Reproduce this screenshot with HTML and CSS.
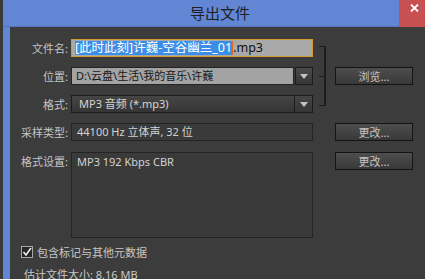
FILE: index.html
```html
<!DOCTYPE html>
<html lang="zh-CN">
<head>
<meta charset="utf-8">
<title>导出文件</title>
<link rel="stylesheet" href="styles.css">
</head>
<body>
<div class="win">
  <div class="titlebar">
    <div class="title">导出文件</div>
    <div class="close">
      <svg width="9" height="8" viewBox="0 0 9 8"><path d="M1 0.5 L8 7.5 M8 0.5 L1 7.5" stroke="#fff" stroke-width="1.8" fill="none"/></svg>
    </div>
  </div>
  <div class="content">
    <div class="grid">
      <div class="label r1">文件名:</div>
      <div class="field name r1"><span class="sel">[此时此刻]许巍-空谷幽兰_01</span><span class="caret"></span><span class="ext">.mp3</span></div>
      <div class="bracket"></div>

      <div class="label r2">位置:</div>
      <div class="combo r2">
        <div class="field loc">D:\云盘\生活\我的音乐\许巍</div>
        <div class="arrowbtn"><span class="tri"></span></div>
      </div>
      <div class="btn r2">浏览...</div>

      <div class="label r3">格式:</div>
      <div class="dropdown r3">
        <div class="ddtext">MP3 音频 (*.mp3)</div>
        <div class="ddarrow"><span class="tri"></span></div>
      </div>

      <div class="label r4">采样类型:</div>
      <div class="field dark r4">44100 Hz 立体声, 32 位</div>
      <div class="btn r4">更改...</div>

      <div class="label r5">格式设置:</div>
      <div class="field dark box r5">MP3 192 Kbps CBR</div>
      <div class="btn r5">更改...</div>
    </div>
    <div class="check">
      <svg class="cb" width="12" height="12" viewBox="0 0 12 12"><rect x="0.5" y="0.5" width="11" height="11" fill="#262626" stroke="#a8a8a8"/><path d="M2.5 6 L5 9 L10 2" stroke="#f0f0f0" stroke-width="1.6" fill="none"/></svg>
      <span>包含标记与其他元数据</span>
    </div>
    <div class="estimate">估计文件大小: 8.16 MB</div>
  </div>
</div>
</body>
</html>
```
FILE: styles.css
```css
html, body {
  margin: 0;
  padding: 0;
}
body {
  width: 425px;
  height: 279px;
  overflow: hidden;
  background: #3a3a3a;
  font-family: "Noto Sans", "Noto Sans CJK SC", sans-serif;
  font-size: 11px;
  color: #c6c6c6;
}
.win {
  margin-left: 3px;
  width: 422px;
  height: 279px;
  background: #6286d4;
  display: flex;
  flex-direction: column;
}
.titlebar {
  height: 26px;
  border-bottom: 1px solid #5675c0;
  display: flex;
  flex-shrink: 0;
}
.title {
  flex: 1;
  text-align: center;
  padding-left: 38px;
  font-family: "Noto Sans CJK SC", sans-serif;
  font-size: 15px;
  line-height: 25px;
  color: #1f1f1f;
}
.close {
  width: 26px;
  height: 27px;
  background: #c75050;
  box-sizing: border-box;
  padding: 4px 0 0 11px;
}
.close svg { display: block; }
.content {
  flex: 1;
  margin-left: 7px;
  background: #3c3c3c;
  padding-top: 12px;
}
.grid {
  display: grid;
  grid-template-columns: 61px 242px 22px 78px;
  grid-template-rows: 18px 18px 18px 18px 86px;
  row-gap: 10px;
}
.r1 { grid-row: 1; }
.r2 { grid-row: 2; }
.r3 { grid-row: 3; }
.r4 { grid-row: 4; }
.r5 { grid-row: 5; margin-top: 1px; }
.label {
  grid-column: 1;
  text-align: right;
  padding-right: 3px;
  line-height: 18px;
  color: #c4c4c4;
  font-family: "Noto Sans CJK SC", sans-serif;
}
.field {
  box-sizing: border-box;
  height: 18px;
  line-height: 16px;
  white-space: nowrap;
  overflow: hidden;
}
.name {
  grid-column: 2;
  border: 1px solid #d29c2c;
  background: #a9a9a9;
  padding-left: 3px;
  font-size: 12.5px;
  display: flex;
  align-items: center;
}
.sel {
  background: #3a8ee8;
  color: #ffffff;
  line-height: 14px;
}
.caret {
  width: 1px;
  height: 14px;
  background: #e2661e;
}
.ext { color: #111; line-height: 14px; }
.combo {
  grid-column: 2;
  display: flex;
  gap: 1px;
}
.loc {
  flex: 1;
  border: 1px solid #242424;
  background: #a3a3a3;
  color: #161616;
  padding-left: 4px;
}
.arrowbtn, .ddarrow {
  width: 18px;
  display: flex;
  align-items: center;
  justify-content: center;
}
.arrowbtn {
  box-sizing: border-box;
  border: 1px solid #1c1c1c;
  background: linear-gradient(#4c4c4c, #363636);
}
.tri {
  width: 0;
  height: 0;
  border-left: 4px solid transparent;
  border-right: 4px solid transparent;
  border-top: 5px solid #c2c2c2;
}
.dropdown {
  grid-column: 2;
  box-sizing: border-box;
  height: 18px;
  border: 1px solid #1c1c1c;
  background: linear-gradient(#454545, #353535);
  display: flex;
}
.ddtext {
  flex: 1;
  padding-left: 7px;
  line-height: 16px;
  color: #d4d4d4;
  border-right: 1px solid #1c1c1c;
}
.ddarrow { width: 17px; }
.dark {
  grid-column: 2;
  border: 1px solid #242424;
  background: #3a3a3a;
  color: #d2d2d2;
  padding-left: 5px;
}
.box {
  height: 86px;
  line-height: 18px;
}
.bracket {
  grid-column: 3;
  grid-row: 1 / 4;
  margin: 7px 0 7px 6px;
  width: 7px;
  box-sizing: border-box;
  border-top: 1px solid #1c1c1c;
  border-bottom: 1px solid #1c1c1c;
  border-right: 2px solid #1c1c1c;
  background: linear-gradient(#1c1c1c, #1c1c1c) no-repeat left center / 5px 1px;
}
.btn {
  grid-column: 4;
  box-sizing: border-box;
  height: 18px;
  border: 1px solid #141414;
  background: linear-gradient(#4e4e4e, #383838);
  color: #c4c4c4;
  text-align: center;
  line-height: 16px;
  font-family: "Noto Sans CJK SC", sans-serif;
}
.check {
  display: flex;
  align-items: center;
  gap: 4px;
  margin: 8px 0 0 11px;
  height: 14px;
  font-family: "Noto Sans CJK SC", sans-serif;
  color: #c8c8c8;
}
.cb { display: block; }
.estimate {
  margin: 9px 0 0 14px;
  line-height: 14px;
  color: #c8c8c8;
}
```
